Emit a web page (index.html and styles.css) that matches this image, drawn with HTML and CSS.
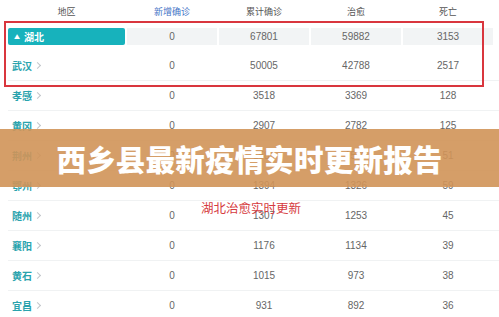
FILE: index.html
```html
<!DOCTYPE html>
<html lang="zh">
<head>
<meta charset="utf-8">
<link rel="stylesheet" href="styles.css">
</head>
<body>
<div class="page">
  <div class="table">
    <div class="row head">
      <div class="c">地区</div>
      <div class="c blue">新增确诊</div>
      <div class="c">累计确诊</div>
      <div class="c">治愈</div>
      <div class="c">死亡</div>
    </div>
    <div class="row prov">
      <div class="name-p"><span class="tri">▲</span>湖北</div>
      <div class="c box">0</div>
      <div class="c box">67801</div>
      <div class="c box">59882</div>
      <div class="c box">3153</div>
    </div>
    <div class="row"><div class="name">武汉<span class="chev"></span></div><div class="c">0</div><div class="c">50005</div><div class="c">42788</div><div class="c">2517</div></div>
    <div class="row"><div class="name">孝感<span class="chev"></span></div><div class="c">0</div><div class="c">3518</div><div class="c">3369</div><div class="c">128</div></div>
    <div class="row"><div class="name">黄冈<span class="chev"></span></div><div class="c">0</div><div class="c">2907</div><div class="c">2782</div><div class="c">125</div></div>
    <div class="row"><div class="name">荆州<span class="chev"></span></div><div class="c">0</div><div class="c">1580</div><div class="c">1525</div><div class="c">51</div></div>
    <div class="row"><div class="name">鄂州<span class="chev"></span></div><div class="c">0</div><div class="c">1394</div><div class="c">1326</div><div class="c">59</div></div>
    <div class="row"><div class="name">随州<span class="chev"></span></div><div class="c">0</div><div class="c">1307</div><div class="c">1253</div><div class="c">45</div></div>
    <div class="row"><div class="name">襄阳<span class="chev"></span></div><div class="c">0</div><div class="c">1176</div><div class="c">1134</div><div class="c">39</div></div>
    <div class="row"><div class="name">黄石<span class="chev"></span></div><div class="c">0</div><div class="c">1015</div><div class="c">973</div><div class="c">38</div></div>
    <div class="row"><div class="name">宜昌<span class="chev"></span></div><div class="c">0</div><div class="c">931</div><div class="c">892</div><div class="c">36</div></div>
  </div>
  <div class="redbox"></div>
  <div class="caption">湖北治愈实时更新</div>
  <div class="banner">西乡县最新疫情实时更新报告</div>
</div>
</body>
</html>
```
FILE: styles.css
```css
html, body {
  margin: 0;
  padding: 0;
  background: #ffffff;
}
body {
  font-family: "Liberation Sans", "Noto Sans CJK SC", sans-serif;
  color: #666;
  width: 499px;
  height: 317px;
  overflow: hidden;
}
.page {
  position: relative;
  width: 499px;
  height: 317px;
  padding-left: 8px;
  box-sizing: border-box;
}
.table {
  display: flex;
  flex-direction: column;
}
.row {
  display: grid;
  grid-template-columns: 117px 90px 90px 90px 90px;
  column-gap: 2px;
  height: 30px;
  align-items: center;
  border-bottom: 1px solid #f0f2f3;
  box-sizing: border-box;
  font-size: 10px;
}
.row.head {
  height: 21px;
  align-items: end;
  padding-bottom: 1px;
  border-bottom: none;
  font-family: "Noto Sans CJK SC", sans-serif;
  font-size: 9px;
  color: #555;
}
.c {
  text-align: center;
  line-height: 17px;
}
.blue {
  color: #3f74c6;
}
.row.prov {
  border-bottom: none;
}
.box {
  background: #f2f4f5;
  height: 17px;
}
.name-p {
  background: #17b2bc;
  color: #fff;
  height: 17px;
  line-height: 17px;
  border-radius: 2px;
  font-family: "Noto Sans CJK SC", sans-serif;
  font-weight: 700;
  font-size: 10px;
  padding-left: 6px;
}
.tri {
  font-size: 6px;
  margin-right: 4px;
  vertical-align: 2px;
}
.name {
  display: flex;
  align-items: center;
  font-family: "Noto Sans CJK SC", sans-serif;
  font-size: 10px;
  font-weight: 700;
  color: #2aa3ad;
  padding-left: 4px;
}
.chev {
  display: inline-block;
  width: 4px;
  height: 4px;
  border-top: 1px solid #c2c6ca;
  border-right: 1px solid #c2c6ca;
  transform: rotate(45deg);
  margin-left: 3px;
}
.redbox {
  position: absolute;
  left: 4px;
  top: 21px;
  width: 480px;
  height: 66px;
  border: 2px solid #d9363e;
  box-sizing: border-box;
}
.caption {
  position: absolute;
  left: 201px;
  top: 200px;
  font-family: "Noto Sans CJK SC", sans-serif;
  font-size: 12.5px;
  color: #d63a40;
  line-height: 16px;
}
.banner {
  position: absolute;
  left: 0;
  top: 129px;
  width: 499px;
  height: 58px;
  background: rgba(208, 148, 88, 0.9);
  color: #fff;
  font-family: "Noto Sans CJK SC", sans-serif;
  font-weight: 900;
  font-size: 29.5px;
  line-height: 58px;
  text-align: center;
  letter-spacing: 0.2px;
}
```
